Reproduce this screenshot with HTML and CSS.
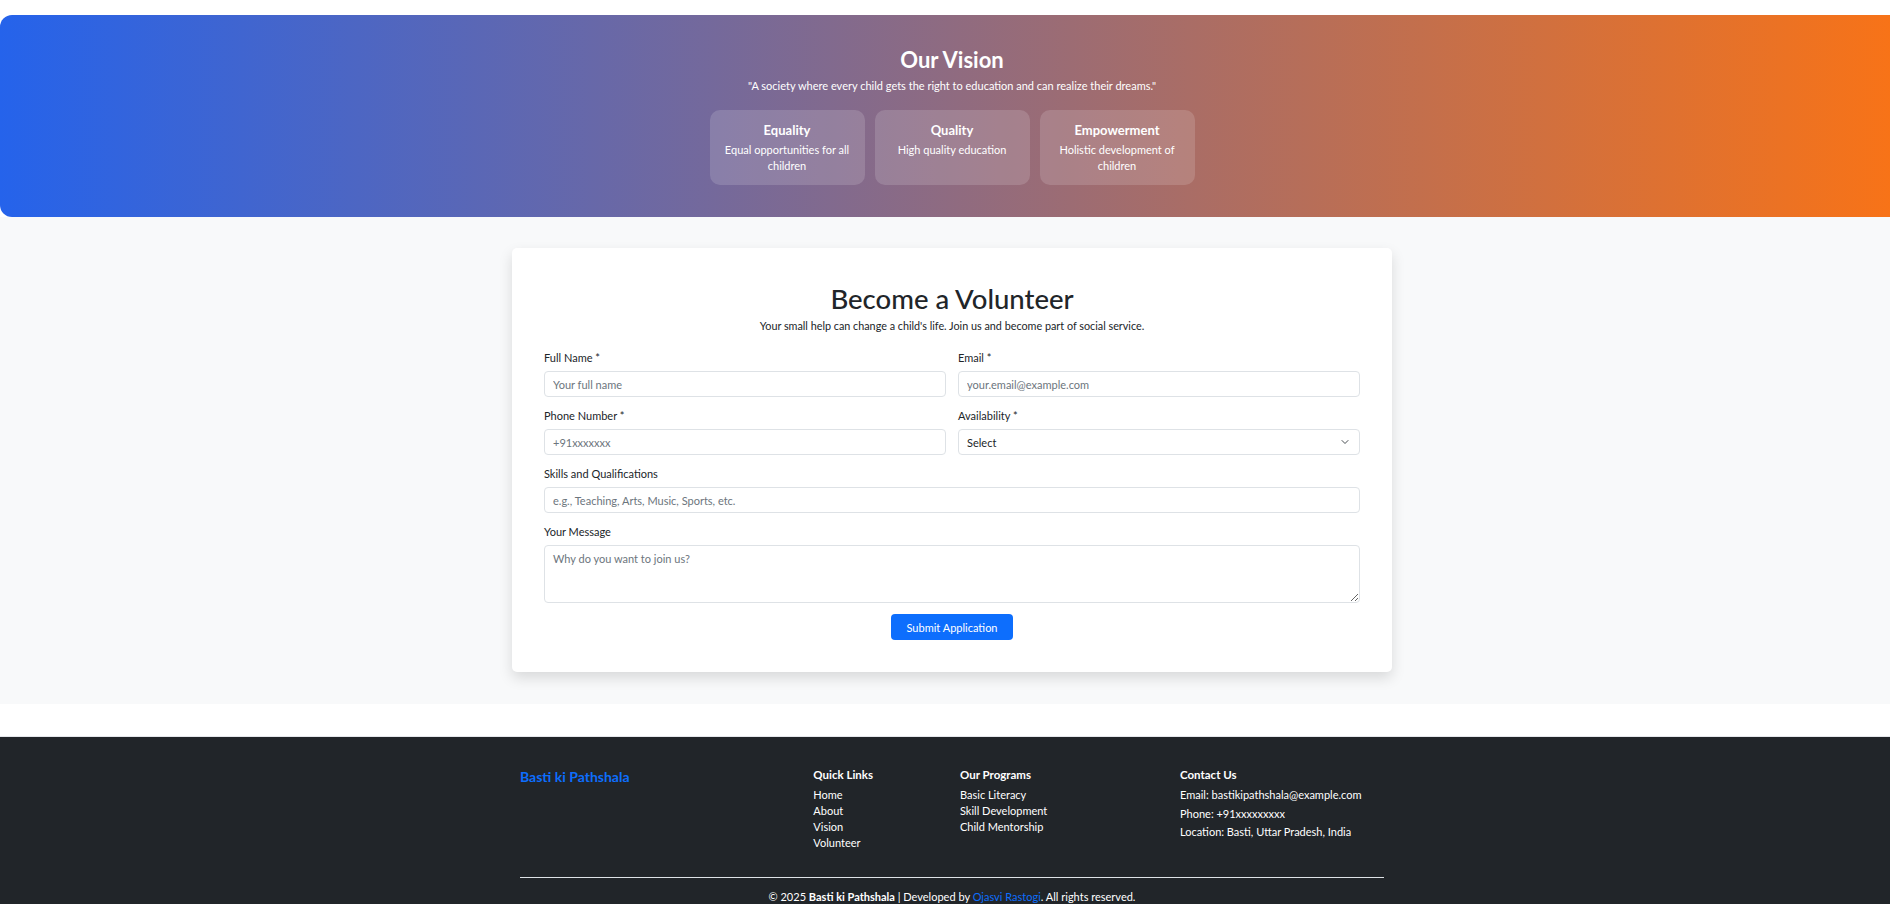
FILE: index.html
```html
<!DOCTYPE html>
<html lang="en">
<head>
<meta charset="utf-8">
<title>Basti ki Pathshala</title>
<link rel="stylesheet" href="styles.css">
</head>
<body>
<div class="page">
  <section class="vision">
    <h2 class="vision-title">Our Vision</h2>
    <p class="vision-quote">"A society where every child gets the right to education and can realize their dreams."</p>
    <div class="vision-cards">
      <div class="vcard"><h3>Equality</h3><p>Equal opportunities for all children</p></div>
      <div class="vcard"><h3>Quality</h3><p>High quality education</p></div>
      <div class="vcard"><h3>Empowerment</h3><p>Holistic development of children</p></div>
    </div>
  </section>

  <section class="volunteer">
    <div class="form-card">
      <h2 class="form-title">Become a Volunteer</h2>
      <p class="form-sub">Your small help can change a child's life. Join us and become part of social service.</p>
      <form class="form-grid">
        <div class="field">
          <label class="field-label">Full Name *</label>
          <input class="field-input" type="text" placeholder="Your full name">
        </div>
        <div class="field">
          <label class="field-label">Email *</label>
          <input class="field-input" type="email" placeholder="your.email@example.com">
        </div>
        <div class="field">
          <label class="field-label">Phone Number *</label>
          <input class="field-input" type="tel" placeholder="+91xxxxxxx">
        </div>
        <div class="field">
          <label class="field-label">Availability *</label>
          <div class="select-wrap">
            <select class="field-input field-select">
              <option>Select</option>
            </select>
            <svg class="select-arrow" width="8" height="8" viewBox="0 0 16 16"><path d="M2 5l6 6 6-6" fill="none" stroke="#343a40" stroke-width="1.8" stroke-linecap="round" stroke-linejoin="round"/></svg>
          </div>
        </div>
        <div class="field field-wide">
          <label class="field-label">Skills and Qualifications</label>
          <input class="field-input" type="text" placeholder="e.g., Teaching, Arts, Music, Sports, etc.">
        </div>
        <div class="field field-wide">
          <label class="field-label">Your Message</label>
          <textarea class="field-input field-area" placeholder="Why do you want to join us?"></textarea>
        </div>
        <div class="field-wide submit-row">
          <button class="submit-btn" type="button">Submit Application</button>
        </div>
      </form>
    </div>
  </section>

  <footer class="footer">
    <div class="footer-inner">
      <div class="footer-row">
        <div class="fcol fcol-4"><h3 class="brand">Basti ki Pathshala</h3></div>
        <div class="fcol fcol-2">
          <h4 class="fhead">Quick Links</h4>
          <ul class="flinks">
            <li>Home</li><li>About</li><li>Vision</li><li>Volunteer</li>
          </ul>
        </div>
        <div class="fcol fcol-3">
          <h4 class="fhead">Our Programs</h4>
          <ul class="flinks">
            <li>Basic Literacy</li><li>Skill Development</li><li>Child Mentorship</li>
          </ul>
        </div>
        <div class="fcol fcol-3">
          <h4 class="fhead">Contact Us</h4>
          <p class="fcontact">Email: bastikipathshala@example.com</p>
          <p class="fcontact">Phone: +91xxxxxxxxx</p>
          <p class="fcontact">Location: Basti, Uttar Pradesh, India</p>
        </div>
      </div>
      <hr class="fline">
      <p class="copy">© 2025 <strong>Basti ki Pathshala</strong> | Developed by <span class="dev">Ojasvi Rastogi</span>. All rights reserved.</p>
    </div>
  </footer>
</div>
</body>
</html>
```

FILE: styles.css
```css
html { overflow-x: hidden; }
* { box-sizing: border-box; }
body {
  margin: 0;
  font-family: "Lato", "Open Sans", sans-serif;
  font-size: 11px;
  color: #212529;
  background: #fff;
}
.page { width: 1904px; }

/* Vision hero */
.vision {
  margin-top: 15px;
  padding: 32px 0;
  border-radius: 12px;
  background: linear-gradient(to right, #2563eb, #f97316);
  color: #fff;
  text-align: center;
}
.vision-title {
  margin: 0;
  font-size: 22px;
  line-height: 26px;
  font-weight: 700;
}
.vision-quote {
  margin: 5px 0 16px;
  font-size: 11px;
  line-height: 16px;
}
.vision-cards {
  display: flex;
  justify-content: center;
  gap: 10px;
}
.vcard {
  width: 155px;
  height: 75px;
  padding: 12px 12px;
  border-radius: 10px;
  background: rgba(255, 255, 255, 0.15);
}
.vcard h3 {
  margin: 0 0 4px;
  font-size: 13px;
  line-height: 16px;
  font-weight: 700;
}
.vcard p {
  margin: 0;
  font-size: 11px;
  line-height: 16px;
}

/* Volunteer */
.volunteer {
  background: #f8f9fa;
  padding: 31px 0 32px;
}
.form-card {
  width: 880px;
  margin: 0 auto;
  background: #fff;
  border-radius: 5px;
  box-shadow: 0 6px 14px rgba(0, 0, 0, 0.13);
  padding: 35px 32px 32px;
}
.form-title {
  margin: 0 0 4px;
  text-align: center;
  font-size: 27.5px;
  line-height: 31px;
  font-weight: 500;
}
.form-sub {
  margin: 0 0 16px;
  text-align: center;
  font-size: 10.8px;
  line-height: 16px;
}
.form-grid {
  display: grid;
  grid-template-columns: 1fr 1fr;
  column-gap: 12px;
  row-gap: 11px;
}
.field { display: flex; flex-direction: column; }
.field-wide { grid-column: 1 / -1; }
.field-label {
  font-size: 11px;
  line-height: 16px;
  margin-bottom: 5px;
}
.field-input {
  height: 26px;
  width: 100%;
  border: 1px solid #dee2e6;
  border-radius: 4px;
  padding: 0 8px;
  font-family: inherit;
  font-size: 11px;
  color: #212529;
  background: #fff;
}
.field-input::placeholder { color: #6c757d; opacity: 1; }
.select-wrap { position: relative; }
.field-select { appearance: none; -webkit-appearance: none; }
.select-arrow {
  position: absolute;
  right: 11px;
  top: 9px;
  pointer-events: none;
}
.field-area {
  height: 58px;
  padding: 5px 8px;
  resize: vertical;
  line-height: 16px;
}
.submit-row { display: flex; justify-content: center; }
.submit-btn {
  height: 26px;
  width: 122px;
  border: none;
  border-radius: 4px;
  background: #0d6efd;
  color: #fff;
  font-family: inherit;
  font-size: 11px;
}

/* Footer */
.footer {
  margin-top: 32px;
  background: #212529;
  border-top: 1px solid #e5e7eb;
  color: #fff;
  padding: 31px 0 20px;
}
.footer-inner { width: 880px; margin: 0 auto; }
.footer-row { display: flex; }
.fcol { padding: 0 8px; }
.fcol-4 { width: 33.3333%; }
.fcol-2 { width: 16.6667%; }
.fcol-3 { width: 25%; }
.brand {
  margin: 0;
  color: #0d6efd;
  font-size: 14px;
  line-height: 17px;
  font-weight: 700;
}
.fhead {
  margin: 0 0 5px;
  font-size: 11.5px;
  line-height: 14px;
  font-weight: 700;
}
.flinks { list-style: none; margin: 0; padding: 0; }
.flinks li { line-height: 16px; }
.fcontact { margin: 0 0 2.5px; line-height: 16px; }
.fline {
  margin: 26px 8px 11px;
  border: 0;
  border-top: 1px solid #dee2e6;
}
.copy { margin: 0; text-align: center; line-height: 16px; }
.dev { color: #0d6efd; }
```
